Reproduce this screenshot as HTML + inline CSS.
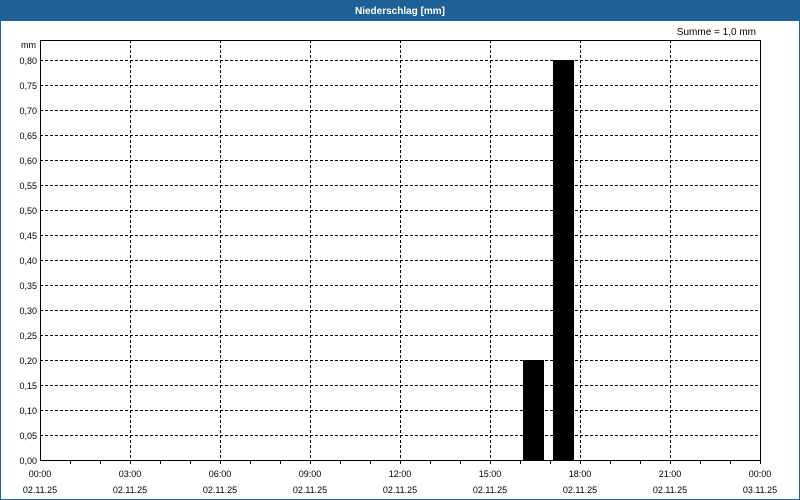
<!DOCTYPE html>
<html><head><style>
html,body{margin:0;padding:0;background:#fff;}
body{width:800px;height:500px;overflow:hidden;position:relative;font-family:"Liberation Sans",sans-serif;}
</style></head><body>
<svg width="800" height="500" xmlns="http://www.w3.org/2000/svg" style="position:absolute;left:0;top:0" font-family="Liberation Sans, sans-serif" font-size="10">
<rect x="0" y="0" width="800" height="500" fill="#fff"/>
<rect x="0" y="0" width="800" height="21" fill="#1d6197"/>
<rect x="0.5" y="0.5" width="799" height="499" fill="none" stroke="#1d6197" stroke-width="1"/>
<text x="400" y="14" text-anchor="middle" fill="#fff" font-weight="bold" font-size="10">Niederschlag [mm]</text>
<text x="756" y="35" text-anchor="end" fill="#000">Summe = 1,0 mm</text>
<text x="36" y="48" text-anchor="end" fill="#000" font-size="9">mm</text>
<g stroke="#000" stroke-width="1" stroke-dasharray="3,2" shape-rendering="crispEdges">
<line x1="40" y1="60.5" x2="760" y2="60.5"/><line x1="40" y1="85.5" x2="760" y2="85.5"/>
<line x1="40" y1="110.5" x2="760" y2="110.5"/><line x1="40" y1="135.5" x2="760" y2="135.5"/>
<line x1="40" y1="160.5" x2="760" y2="160.5"/><line x1="40" y1="185.5" x2="760" y2="185.5"/>
<line x1="40" y1="210.5" x2="760" y2="210.5"/><line x1="40" y1="235.5" x2="760" y2="235.5"/>
<line x1="40" y1="260.5" x2="760" y2="260.5"/><line x1="40" y1="285.5" x2="760" y2="285.5"/>
<line x1="40" y1="310.5" x2="760" y2="310.5"/><line x1="40" y1="335.5" x2="760" y2="335.5"/>
<line x1="40" y1="360.5" x2="760" y2="360.5"/><line x1="40" y1="385.5" x2="760" y2="385.5"/>
<line x1="40" y1="410.5" x2="760" y2="410.5"/><line x1="40" y1="435.5" x2="760" y2="435.5"/>
<line x1="130.5" y1="40" x2="130.5" y2="460"/><line x1="220.5" y1="40" x2="220.5" y2="460"/>
<line x1="310.5" y1="40" x2="310.5" y2="460"/><line x1="400.5" y1="40" x2="400.5" y2="460"/>
<line x1="490.5" y1="40" x2="490.5" y2="460"/><line x1="580.5" y1="40" x2="580.5" y2="460"/>
<line x1="670.5" y1="40" x2="670.5" y2="460"/>
</g>
<rect x="523" y="360" width="21" height="100" fill="#000"/>
<rect x="553" y="60" width="21" height="400" fill="#000"/>
<rect x="40.5" y="40.5" width="720" height="420" fill="none" stroke="#000" stroke-width="1" shape-rendering="crispEdges"/>
<g stroke="#000" shape-rendering="crispEdges">
<line x1="70.5" y1="460" x2="70.5" y2="464"/><line x1="100.5" y1="460" x2="100.5" y2="464"/><line x1="130.5" y1="460" x2="130.5" y2="464"/>
<line x1="160.5" y1="460" x2="160.5" y2="464"/><line x1="190.5" y1="460" x2="190.5" y2="464"/><line x1="220.5" y1="460" x2="220.5" y2="464"/>
<line x1="250.5" y1="460" x2="250.5" y2="464"/><line x1="280.5" y1="460" x2="280.5" y2="464"/><line x1="310.5" y1="460" x2="310.5" y2="464"/>
<line x1="340.5" y1="460" x2="340.5" y2="464"/><line x1="370.5" y1="460" x2="370.5" y2="464"/><line x1="400.5" y1="460" x2="400.5" y2="464"/>
<line x1="430.5" y1="460" x2="430.5" y2="464"/><line x1="460.5" y1="460" x2="460.5" y2="464"/><line x1="490.5" y1="460" x2="490.5" y2="464"/>
<line x1="520.5" y1="460" x2="520.5" y2="464"/><line x1="550.5" y1="460" x2="550.5" y2="464"/><line x1="580.5" y1="460" x2="580.5" y2="464"/>
<line x1="610.5" y1="460" x2="610.5" y2="464"/><line x1="640.5" y1="460" x2="640.5" y2="464"/><line x1="670.5" y1="460" x2="670.5" y2="464"/>
<line x1="700.5" y1="460" x2="700.5" y2="464"/><line x1="730.5" y1="460" x2="730.5" y2="464"/><line x1="760.5" y1="460" x2="760.5" y2="464"/>
</g>
<g text-anchor="end" fill="#000" font-size="9">
<text x="37" y="64">0,80</text><text x="37" y="89">0,75</text><text x="37" y="114">0,70</text>
<text x="37" y="139">0,65</text><text x="37" y="164">0,60</text><text x="37" y="189">0,55</text>
<text x="37" y="214">0,50</text><text x="37" y="239">0,45</text><text x="37" y="264">0,40</text>
<text x="37" y="289">0,35</text><text x="37" y="314">0,30</text><text x="37" y="339">0,25</text>
<text x="37" y="364">0,20</text><text x="37" y="389">0,15</text><text x="37" y="414">0,10</text>
<text x="37" y="439">0,05</text><text x="37" y="464">0,00</text>
</g>
<g text-anchor="middle" fill="#000" font-size="9">
<text x="40" y="477">00:00</text><text x="130" y="477">03:00</text><text x="220" y="477">06:00</text>
<text x="310" y="477">09:00</text><text x="400" y="477">12:00</text><text x="490" y="477">15:00</text>
<text x="580" y="477">18:00</text><text x="670" y="477">21:00</text><text x="760" y="477">00:00</text>
<text x="40" y="493">02.11.25</text><text x="130" y="493">02.11.25</text><text x="220" y="493">02.11.25</text>
<text x="310" y="493">02.11.25</text><text x="400" y="493">02.11.25</text><text x="490" y="493">02.11.25</text>
<text x="580" y="493">02.11.25</text><text x="670" y="493">02.11.25</text><text x="760" y="493">03.11.25</text>
</g>
</svg>
</body></html>
